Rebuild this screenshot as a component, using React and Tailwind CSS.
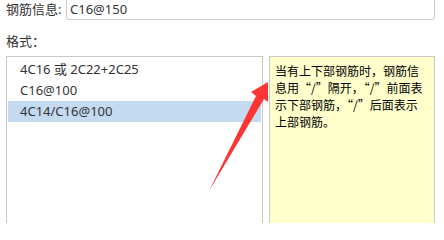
import React from 'react'

const formats = ['4C16 或 2C22+2C25', 'C16@100', '4C14/C16@100']

export default function App() {
  const selected = 2
  return (
    <div
      className="relative w-[444px] h-[223px] overflow-hidden bg-white text-[#333] text-[13px]"
      style={{ fontFamily: '"Noto Sans", "Noto Sans CJK SC", sans-serif' }}
    >
      <div className="pl-[6px] pr-[9px]">
        <div className="-mt-[5px] flex h-[25px] items-center">
          <span className="w-[60px] pt-[3px] leading-[17px]">钢筋信息:</span>
          <div className="flex h-[25px] flex-1 items-center rounded-[3px] border border-[#c9c9c9] pl-[3px] pt-[3px]">
            <span className="leading-[17px]">C16@150</span>
          </div>
        </div>
        <div className="mt-[13px] h-[17px] leading-[17px]">格式：</div>
        <div className="mt-[6px] flex gap-[6px]">
          <ul className="h-[190px] w-[257px] border border-[#c9c9c9] p-[1px] pt-[2px]">
            {formats.map((f, i) => (
              <li
                key={f}
                className={
                  'flex h-[21px] items-center pl-[12px] leading-[17px] ' +
                  (i === selected ? 'bg-[#c4daf0]' : '')
                }
              >
                {f}
              </li>
            ))}
          </ul>
          <div
            className="h-[190px] flex-1 whitespace-nowrap border border-[#c9c9c9] bg-[#ffffcc] pl-[5px] pt-[5px] text-[12px] leading-[17px] text-black"
            style={{ fontFamily: '"Noto Sans CJK SC", sans-serif' }}
          >
            当有上下部钢筋时，钢筋信
            <br />
            息用“/”隔开，“/”前面表
            <br />
            示下部钢筋，“/”后面表示
            <br />
            上部钢筋。
          </div>
        </div>
      </div>
      <svg className="absolute inset-0" width="444" height="223" viewBox="0 0 444 223">
        <polygon points="209,191 256,96 251,92 268,82 268,102 264,99" fill="#ff3535" />
      </svg>
    </div>
  )
}
